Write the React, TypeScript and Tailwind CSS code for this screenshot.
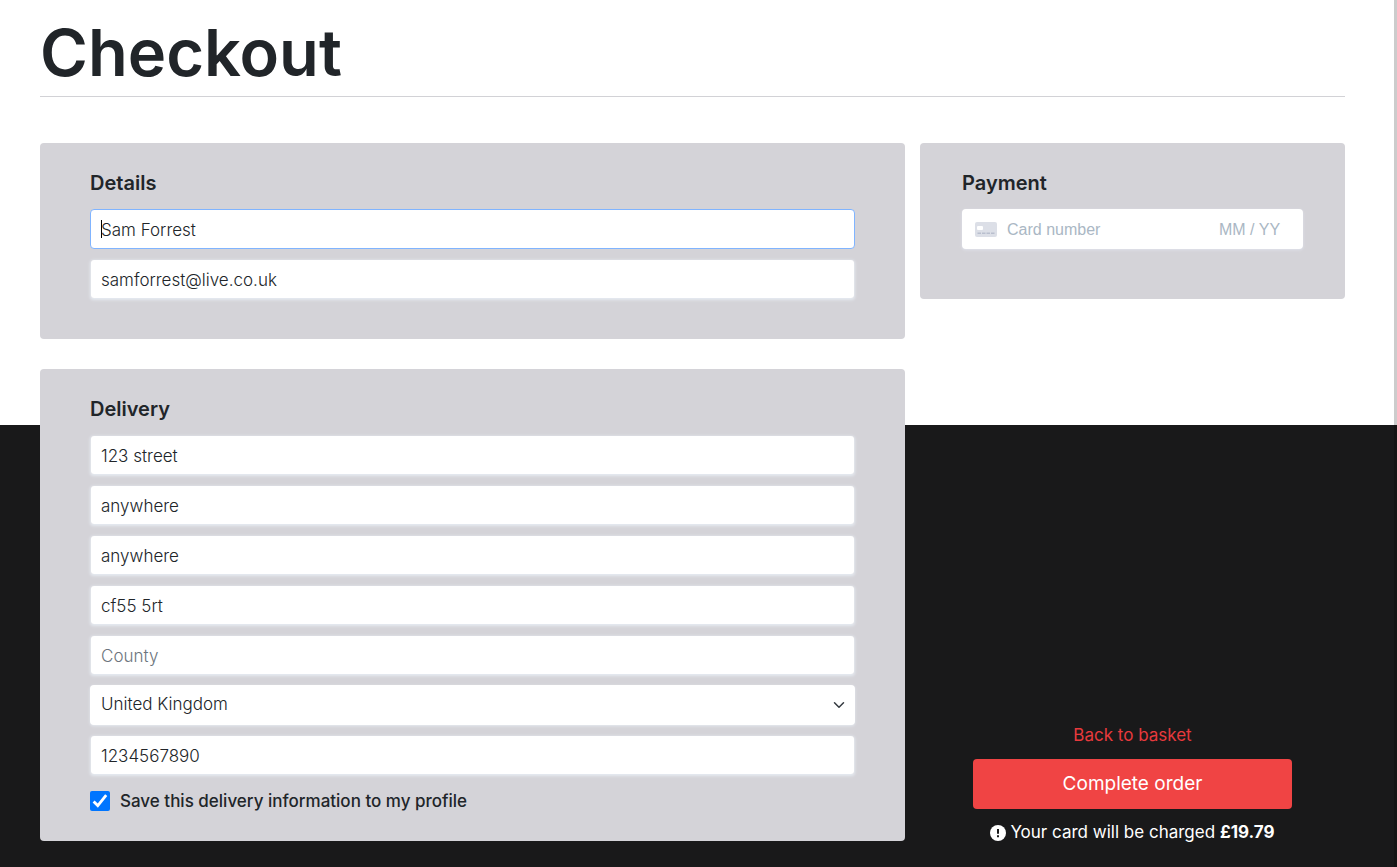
import type { InputHTMLAttributes, ReactNode } from 'react';

const fieldBase =
  'block h-10 w-full rounded border border-transparent bg-white px-2.5 text-[17px] font-light text-[#212529] outline-none placeholder:text-[#6c757d] shadow-[0_1px_3px_0_#e6ebf1]';

type FieldProps = InputHTMLAttributes<HTMLInputElement> & { label: string };

function Field({ label, ...props }: FieldProps) {
  return (
    <input aria-label={label} className={`${fieldBase} bg-clip-padding pt-0.5`} {...props} />
  );
}

function Card({ title, className, children }: { title: string; className: string; children: ReactNode }) {
  return (
    <section className={`rounded bg-[#d4d3d8] pt-7 ${className}`}>
      <h2 className="mb-3.5 text-xl font-semibold leading-6">{title}</h2>
      {children}
    </section>
  );
}

function CardIcon() {
  return (
    <svg className="h-[15px] w-[22px] shrink-0" viewBox="0 0 22 15" aria-hidden="true">
      <rect width="22" height="15" rx="2" fill="#dcdfe7" />
      <rect x="2" y="4" width="6" height="4" rx="1" fill="#fff" />
      <path d="M2.5 11.2h3.5M7 11.2h3.5M11.5 11.2h3.5M16 11.2h3.5" stroke="#b9bfce" strokeWidth="1.4" />
    </svg>
  );
}

export default function App() {
  return (
    <div className="min-h-screen border-r-[3px] border-black/20 bg-[linear-gradient(#fff_425px,#19191a_425px)] pb-5 pl-10 pr-[49px] font-['Inter',sans-serif] text-[#212529]">
      <header className="mb-[46px] border-b border-[#d2d2d6] pb-[3px] pt-[13px]">
        <h1 className="text-[65px] font-semibold leading-20">Checkout</h1>
      </header>

      <form className="grid grid-cols-[865fr_425fr] gap-x-[15px]" onSubmit={(e) => e.preventDefault()}>
        <div className="flex flex-col gap-[30px] pb-1">
          <Card title="Details" className="px-[50px] pb-10">
            <div className="flex flex-col gap-2.5">
              <div className="relative">
                <input
                  aria-label="Full name"
                  defaultValue="Sam Forrest"
                  className="block h-10 w-full rounded border border-[#80b4ff] bg-white px-2.5 pt-0.5 text-[17px] font-light outline-none"
                />
                <span className="absolute left-[11px] top-[11px] h-[18px] w-px bg-black" />
              </div>
              <Field label="Email address" type="email" defaultValue="samforrest@live.co.uk" />
            </div>
          </Card>

          <Card title="Delivery" className="px-[50px] pb-[30px]">
            <div className="flex flex-col gap-2.5">
              <Field label="Street address 1" defaultValue="123 street" />
              <Field label="Street address 2" defaultValue="anywhere" />
              <Field label="Town or city" defaultValue="anywhere" />
              <Field label="Postcode" defaultValue="cf55 5rt" />
              <Field label="County" placeholder="County" />
              <div className="relative">
                <select aria-label="Country" className={`${fieldBase} appearance-none`}>
                  <option>United Kingdom</option>
                </select>
                <svg
                  className="pointer-events-none absolute right-2.5 top-3.5 size-3"
                  viewBox="0 0 16 16"
                  fill="none"
                  stroke="#343a40"
                  strokeWidth="2"
                  strokeLinecap="round"
                  strokeLinejoin="round"
                  aria-hidden="true"
                >
                  <path d="m2 5 6 6 6-6" />
                </svg>
              </div>
              <Field label="Phone number" type="tel" defaultValue="1234567890" />
            </div>
            <div className="mt-4 flex items-center gap-2.5">
              <span className="relative size-5">
                <input
                  id="save-info"
                  type="checkbox"
                  defaultChecked
                  className="peer block size-5 appearance-none rounded-xs bg-white checked:bg-[#0075ff]"
                />
                <svg
                  className="pointer-events-none absolute inset-0 hidden size-5 peer-checked:block"
                  viewBox="0 0 20 20"
                  fill="none"
                  stroke="#fff"
                  strokeWidth="2.8"
                  aria-hidden="true"
                >
                  <path d="m3.6 10.4 4.2 4.2 8.4-10.4" />
                </svg>
              </span>
              <label htmlFor="save-info" className="text-[17px] font-medium leading-5">
                Save this delivery information to my profile
              </label>
            </div>
          </Card>
        </div>

        <div className="flex flex-col justify-between">
          <Card title="Payment" className="px-[42px] pb-[50px]">
            <div className="flex h-10 items-center gap-2.5 rounded bg-white pl-[13px] pr-[22px] pt-px font-['Liberation_Sans',sans-serif] text-base shadow-[0_1px_3px_0_#e0e2ec]">
              <CardIcon />
              <input
                aria-label="Card number"
                placeholder="Card number"
                className="w-0 min-w-0 flex-1 outline-none placeholder:text-[#aab7c4]"
              />
              <input
                aria-label="Expiry date"
                placeholder="MM / YY"
                className="w-[62px] outline-none placeholder:text-[#aab7c4]"
              />
            </div>
          </Card>

          <div className="flex flex-col px-[53px] text-center text-white">
            <a href="#basket" className="mb-3 text-[17px] leading-6 text-[#e83a3d]">
              Back to basket
            </a>
            <button type="submit" className="h-[50px] rounded bg-[#f04444] text-[19px]">
              Complete order
            </button>
            <p className="mt-3 flex h-6 items-center justify-center gap-1 whitespace-nowrap text-[17px]">
              <svg className="size-4 shrink-0" viewBox="0 0 16 16" aria-hidden="true">
                <circle cx="8" cy="8" r="8" fill="#fff" />
                <path d="M8 4v4.8M8 10.3v1.9" stroke="#19191a" strokeWidth="2" />
              </svg>
              <span>
                Your card will be charged <strong className="font-bold">£19.79</strong>
              </span>
            </p>
          </div>
        </div>
      </form>
    </div>
  );
}
